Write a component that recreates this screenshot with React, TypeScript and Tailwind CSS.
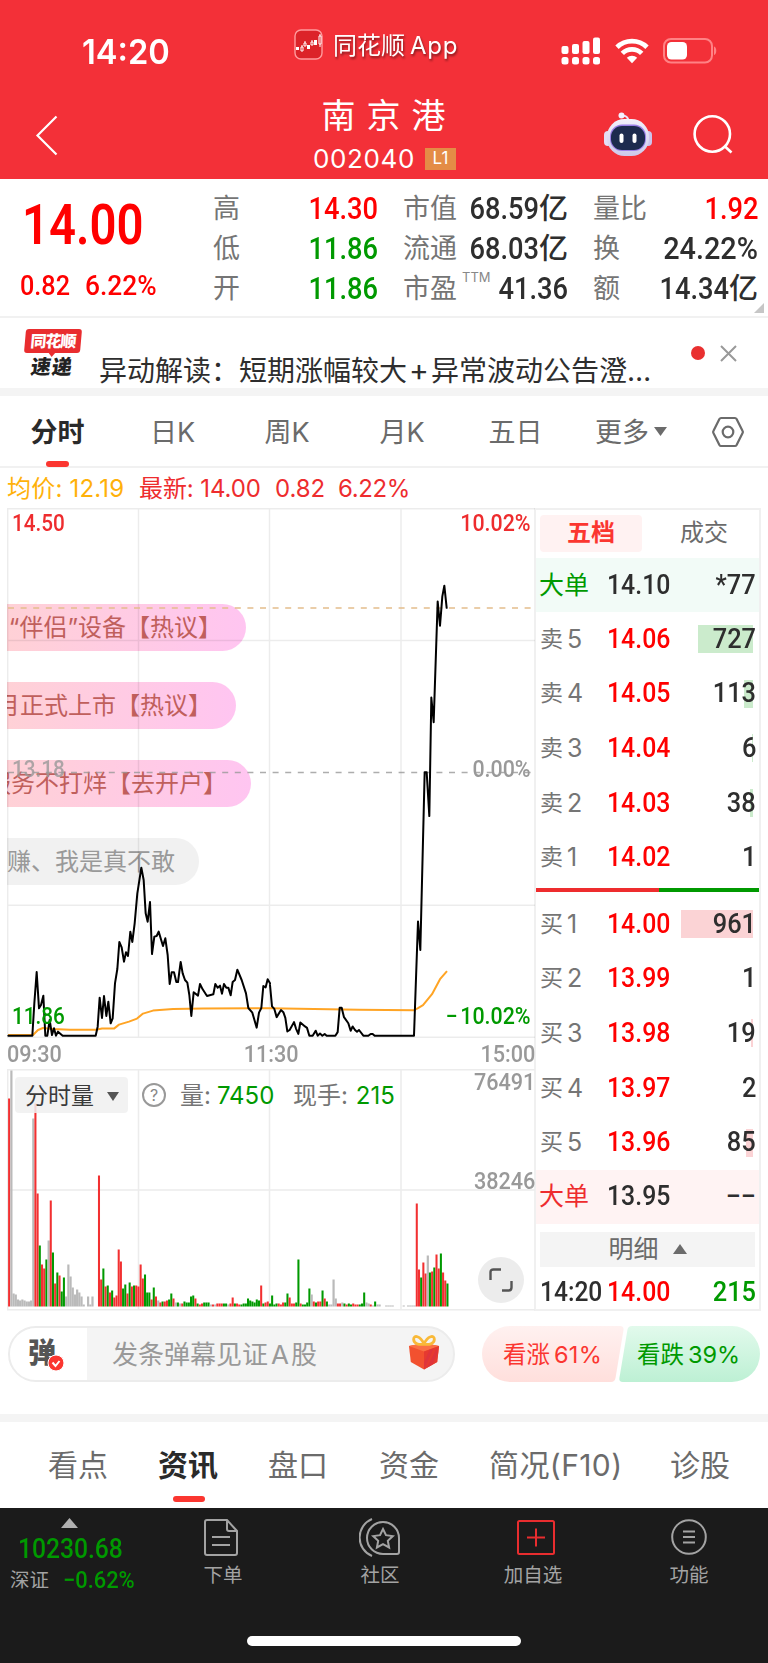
import React from 'react';
import clsx from 'clsx';

const quotes = [
  [
    { label: '高', value: '14.30', color: 'text-[#ff0000]' },
    { label: '低', value: '11.86', color: 'text-[#009900]' },
    { label: '开', value: '11.86', color: 'text-[#009900]' },
  ],
  [
    { label: '市值', value: '68.59', unit: '亿', color: 'text-[#2e2e2e]' },
    { label: '流通', value: '68.03', unit: '亿', color: 'text-[#2e2e2e]' },
    { label: '市盈', sup: 'TTM', value: '41.36', color: 'text-[#2e2e2e]' },
  ],
  [
    { label: '量比', value: '1.92', color: 'text-[#ff0000]' },
    { label: '换', value: '24.22%', color: 'text-[#2e2e2e]' },
    { label: '额', value: '14.34', unit: '亿', color: 'text-[#2e2e2e]' },
  ],
];

const sells = [
  { level: 5, price: '14.06', qty: '727', bar: 55 },
  { level: 4, price: '14.05', qty: '113', bar: 9 },
  { level: 3, price: '14.04', qty: '6', bar: 1 },
  { level: 2, price: '14.03', qty: '38', bar: 3 },
  { level: 1, price: '14.02', qty: '1', bar: 0 },
];

const buys = [
  { level: 1, price: '14.00', qty: '961', bar: 72 },
  { level: 2, price: '13.99', qty: '1', bar: 0 },
  { level: 3, price: '13.98', qty: '19', bar: 2 },
  { level: 4, price: '13.97', qty: '2', bar: 0 },
  { level: 5, price: '13.96', qty: '85', bar: 7 },
];

const morning =
  '25,1337 97,1337 103,1240 110,1146 117,1255 123,1245 130,1217 136,1337 142,1337 149,1290 156,1335 162,1315 168,1337 174,1325 188,1337 287,1337 293,1310 299,1223 306,1284 312,1218 319,1278 325,1235 332,1300 338,1285 345,1180 352,1137 358,1056 365,1072 372,1115 378,1087 384,1098 391,1025 397,1056 404,1000 412,910 424,833 431,870 437,970 443,995 450,936 456,1092 463,1040 470,1038 476,1025 489,1068 496,1045 503,1095 509,1182 515,1147 522,1147 529,1176 534,1176 542,1116 548,1150 555,1170 562,1178 568,1215 574,1278 581,1207 594,1217 600,1182 608,1198 621,1218 640,1213 646,1182 653,1193 660,1187 666,1211 672,1182 679,1193 685,1193 692,1216 698,1176 705,1170 712,1139 725,1170 738,1210 745,1254 757,1268 770,1313 777,1268 784,1254 790,1188 797,1192 803,1168 810,1180';

const afternoon =
  '30,1358 36,1418 43,1425 50,1448 63,1428 70,1434 76,1450 82,1488 89,1484 102,1462 108,1480 115,1495 121,1463 135,1474 141,1478 148,1500 158,1500 167,1486 173,1500 180,1494 187,1500 194,1495 200,1500 226,1500 233,1490 239,1422 245,1422 252,1448 265,1465 272,1486 278,1474 285,1484 291,1489 297,1484 310,1500 325,1500 332,1495 338,1495 344,1500 462,1500 474,1180 481,1260 494,762 500,762 508,885 514,553 521,622 533,284 540,352 547,270 553,240 560,302';

// one entry per minute: r = up, g = down, w = flat, number is the bar height
const volume = (
  'r208 w236 w13 w12 w7 w6 w7 w6 w5 w5 w6 w188 r203 r113 g61 r42 r38 g47 w66 r106 g54 r23 g34 r31 g15 g29 w10 w42 w30 w19 w12 w17 w14 w10 w2 w0 w10 w2 w10 w0 w0 ' +
  'r131 r27 g38 r20 g21 r14 g16 r9 r11 r57 r45 g18 g22 r13 g24 r20 g21 r21 r20 r42 r28 g32 g14 g14 r7 g19 r10 w6 r4 g5 r5 r6 g7 g13 r8 w4 g4 w3 r3 g5 g4 g4 g10 g11 r8 g3 r2 r3 g4 g4 g4 w2 r2 w2 r3 r3 r3 g3 g3 w2 r3 r9 g3 r3 r2 g2 g3 g3 g8 g6 g5 g4 g7 g6 ' +
  'r21 g3 r4 r5 g3 g11 g2 g3 r3 r2 r4 g4 g13 r9 r3 r3 g4 g47 r3 g2 g2 g4 g18 w12 r5 g4 r5 r5 g16 r8 g5 w2 w2 w27 w8 r3 r3 w4 g3 r2 g3 g2 r3 r2 r2 g2 g3 g14 w4 w3 r2 w1 g5 w2 w2 w0 w0 w1 w1 w1 w1 w0 w0 w0 w0 w1 w0 w1 w1 w1 w1 ' +
  'r103 r37 g29 r44 r33 w51 g34 r35 g39 r52 r38 g53 r34 r26 g23'
).split(' ');

const barColors: Record<string, string> = { r: '#f23031', g: '#009900', w: '#bababa' };

const comments = [
  { text: '“伴侣”设备【热议】', width: 'w-[239px]', hot: true },
  { text: '月正式上市【热议】', width: 'w-[229px]', hot: true },
  { text: '服务不打烊【去开户】', width: 'w-[244px]', hot: true },
  { text: '赚、我是真不敢', width: 'w-[192px]', hot: false },
];

// Condensed figures
function Num({ children, className }: { children: React.ReactNode; className?: string }) {
  return (
    <span className={clsx('inline-block whitespace-nowrap font-[Roboto,sans-serif] font-medium leading-none', className)}>
      {children}
    </span>
  );
}

function StatusBar() {
  return (
    <div className="flex h-[90px] text-white">
      <div className="w-[294px] pl-[82px] pt-[35px]">
        <span className="inline-block origin-left scale-x-[.96] text-[34px] font-semibold leading-none">14:20</span>
      </div>
      <div className="flex w-[267px] items-start pt-[29px]">
        <svg width="29" height="31" viewBox="0 0 29 31" fill="none">
          <rect x="1" y="1" width="27" height="29" rx="6" fill="#dc2329" stroke="#ff9b9d" strokeWidth="1.4" />
          <path d="M2 18h3v3H2zM13 16h3v4h-3zM20 11h3v5h-3z" fill="#fff" />
          <path d="M7 18h2v4H7zM10 14h2v3h-2zM17 13h2v3h-2zM25 7h2v8h-2zM8 16v2m3-6v2m7-3v2m8-8v2m0 8v3" stroke="#fff" />
        </svg>
        <span className="ml-[10px] mt-[5px] text-[24px] leading-none drop-shadow-[1px_2px_1px_rgba(0,0,0,.45)]">
          同花顺<span className="ml-[5px] tracking-[.7px]">App</span>
        </span>
      </div>
      <div className="flex items-start gap-[14px] pt-[37px]">
        <svg width="40" height="28" viewBox="0 0 40 28" fill="#fff">
          <rect x="0.5" y="9" width="7" height="8" rx="2" />
          <rect x="11" y="7" width="7" height="10" rx="2" />
          <rect x="21.5" y="4" width="7" height="13" rx="2" />
          <rect x="32" y="0.5" width="7" height="16.5" rx="2" />
          <rect x="0.5" y="20" width="7" height="7.5" rx="2.5" />
          <rect x="11" y="20" width="7" height="7.5" rx="2.5" />
          <rect x="21.5" y="20" width="7" height="7.5" rx="2.5" />
          <rect x="32" y="20" width="7" height="7.5" rx="2.5" />
        </svg>
        <svg width="34" height="27" viewBox="0 0 34 27" fill="none" stroke="#fff" strokeWidth="4.8">
          <path d="M2 10.300a21.5 21.5 0 0 1 30 0" />
          <path d="M7.3 16.400a13.7 13.7 0 0 1 19.400 0" />
          <path d="M11.8 20.8a7.5 7.5 0 0 1 10.4 0L17 26.2z" fill="#fff" stroke="none" />
        </svg>
        <svg width="54" height="27" viewBox="0 0 54 27" fill="none">
          <rect x="1" y="2" width="48" height="23.5" rx="7" stroke="#ff8285" strokeWidth="2" />
          <rect x="4" y="5" width="20" height="17.5" rx="4.5" fill="#fff" />
          <path d="M51 9.5c3 1 3 7.500 0 8.500z" fill="#ff8285" />
        </svg>
      </div>
    </div>
  );
}

function Header() {
  return (
    <header className="h-[179px] bg-[#f33038]">
      <StatusBar />
      <div className="flex h-[89px] text-white">
        <div className="w-[234px] pl-[35px] pt-[25px]">
          <svg width="24" height="41" viewBox="0 0 24 41" fill="none" stroke="#fff" strokeWidth="2.2">
            <path d="M21.500 1.500 2.500 20.500l19 19" />
          </svg>
        </div>
        <div className="w-[300px] text-center">
          <div className="pl-[10px] pt-[9px] text-[34px] leading-[34px] tracking-[11px]">南京港</div>
          <div className="mt-[12px] flex items-center justify-center pl-[1px]">
            <span className="text-[26px] leading-[27px] tracking-[.6px]">002040</span>
            <span className="ml-[10px] flex h-[22px] w-[31px] items-center justify-center bg-[#e48c46] text-[17px] leading-none">
              L1
            </span>
          </div>
        </div>
        <div className="flex w-[234px] pl-[69px]">
          <svg className="mt-[21px]" width="50" height="46" viewBox="0 0 50 46" fill="none">
            <defs>
              <linearGradient id="shell" x2="0" y2="1">
                <stop stopColor="#f3f1fb" />
                <stop offset="1" stopColor="#cdc8ea" />
              </linearGradient>
            </defs>
            <path d="M19 5c4-1 7 2 6 6" stroke="#e9e4fa" strokeWidth="2" />
            <circle cx="18.500" cy="4.500" r="3" fill="#f4f1ff" />
            <rect x="1" y="20" width="8" height="15" rx="4" fill="#e4ddf5" />
            <rect x="41" y="20" width="8" height="15" rx="4" fill="#cdc3ec" />
            <rect x="4" y="8" width="42" height="37" rx="17.500" fill="url(#shell)" />
            <rect x="7" y="13.500" width="36" height="26.500" rx="12" fill="#9a7fe6" />
            <rect x="8" y="15" width="34" height="24" rx="11" fill="#1d2b4e" />
            <rect x="16.500" y="22.500" width="4" height="9.500" rx="2" fill="#fff" />
            <rect x="29.500" y="22.500" width="4" height="9.500" rx="2" fill="#fff" />
          </svg>
          <svg className="ml-[39px] mt-[24px]" width="42" height="42" viewBox="0 0 42 42" fill="none" stroke="#fff" strokeWidth="2.600">
            <circle cx="20.300" cy="20" r="17.700" />
            <path d="m33 32.500 6.500 6" />
          </svg>
        </div>
      </div>
    </header>
  );
}

function QuotePanel() {
  const columns = ['w-[191px] pl-[26px]', 'w-[190px] pl-[25px]', 'w-[190px] pl-[25px]'];
  return (
    <section className="relative flex h-[139px] border-b-2 border-[#f1f1f1]">
      <div className="w-[187px] text-[#ff0000]">
        <Num className="ml-[22px] mt-[19px] origin-left scale-x-[.86] text-[55px] font-semibold">14.00</Num>
        <div className="mt-[19px] flex pl-[20px] text-[28px]">
          <Num className="w-[65px] origin-left scale-x-[.9]">0.82</Num>
          <Num className="origin-left scale-x-[.94]">6.22%</Num>
        </div>
      </div>
      {quotes.map((column, i) => (
        <div key={i} className={clsx('pt-[9px]', columns[i])}>
          {column.map((q) => (
            <div key={q.label} className="flex h-10 items-center whitespace-nowrap">
              <span className="shrink-0 text-[27px] leading-none text-[#757575]">{q.label}</span>
              {q.sup && <span className="-mt-[22px] ml-[5px] w-0 text-[13px] leading-none text-[#888]">{q.sup}</span>}
              <span className={clsx('ml-auto flex items-center', q.color)}>
                <Num className={clsx('origin-right text-[31px]', q.value.includes('%') ? 'scale-x-[.93]' : 'scale-x-[.88]')}>{q.value}</Num>
                {q.unit && <span className="text-[29px] font-medium leading-none">{q.unit}</span>}
              </span>
            </div>
          ))}
        </div>
      ))}
      <svg className="absolute bottom-[3px] right-[4px]" width="10" height="10" viewBox="0 0 10 10">
        <path d="M10 0v10H0z" fill="#c6c6c6" />
      </svg>
    </section>
  );
}

function NewsRow() {
  return (
    <section className="flex h-[78px] border-b-[8px] border-[#f4f4f4]">
      <div className="w-[99px] pl-[25px] pt-[11px]">
        <div className="relative flex h-[24px] w-[56px] -skew-x-[5deg] items-center justify-center rounded-[3px] bg-[#e92d2f] text-[16px] font-black leading-none tracking-[-1px] text-white">
          同花顺
          <svg className="absolute -bottom-[4px] left-[24px]" width="8" height="5" viewBox="0 0 8 5">
            <path d="M0 0h8L4 5z" fill="#e92d2f" />
          </svg>
        </div>
        <div className="ml-[6px] mt-[4px] -skew-x-[8deg] text-[20px] font-black leading-none tracking-[1px] text-[#222]">速递</div>
      </div>
      <div className="w-[592px] whitespace-nowrap pt-[37px] text-[28px] leading-none text-[#2e2e2e]">
        异动解读：短期涨幅较大<span className="inline-block w-[24px] text-center text-[30px]">+</span>异常波动公告澄…
      </div>
      <span className="mt-[28px] size-[14px] rounded-full bg-[#e93030]" />
      <svg className="ml-[15px] mt-[27px]" width="17" height="17" viewBox="0 0 17 17" stroke="#999" strokeWidth="2">
        <path d="m1 1 15 15M16 1 1 16" />
      </svg>
    </section>
  );
}

function PeriodTabs() {
  return (
    <nav className="flex h-[72px] items-center border-b-2 border-[#f1f1f1] pt-[3px] text-[27px] leading-none text-[#6b6b6b]">
      <div className="relative w-[115px] text-center font-bold text-[#2a2a2a]">
        分时
        <span className="absolute -bottom-[21px] left-[46px] h-[6px] w-[23px] rounded-full bg-[#fb3630]" />
      </div>
      <div className="w-[115px] text-center">日K</div>
      <div className="w-[114px] text-center">周K</div>
      <div className="w-[116px] text-center">月K</div>
      <div className="w-[111px] text-center">五日</div>
      <div className="flex w-[140px] items-center pl-[24px]">
        更多
        <svg className="-mt-[2px] ml-[5px]" width="13" height="9" viewBox="0 0 13 9" fill="#6b6b6b">
          <path d="M0 0h13L6.500 9z" />
        </svg>
      </div>
      <svg className="-mt-[2px]" width="34" height="32" viewBox="0 0 34 32" fill="none" stroke="#6b6b6b" strokeWidth="2.200" strokeLinejoin="round">
        <path d="M10 2h14q1 0 1.600 1l6 12q.6 1 0 2l-6 12q-.6 1-1.600 1H10q-1 0-1.600-1l-6-12q-.6-1 0-2l6-12Q9 2 10 2z" />
        <circle cx="17" cy="16" r="5.300" />
      </svg>
    </nav>
  );
}

function PriceChart() {
  return (
    <div className="relative h-[530px] overflow-hidden">
      <div className="flex flex-col items-start gap-[31px] pt-[96px]">
        {comments.map((c) => (
          <div
            key={c.text}
            className={clsx(
              'flex h-[47px] items-center justify-end overflow-hidden whitespace-nowrap rounded-r-full pr-[24px] text-[24px] leading-none',
              c.width,
              c.hot ? 'bg-gradient-to-r from-[#ffd1d6] to-[#ffc5f1] text-[#c05f5c]' : 'bg-[#f1f1f1] text-[#999]'
            )}
          >
            {c.text}
          </div>
        ))}
      </div>
      <svg className="absolute inset-0" width="528" height="530" viewBox="7 508 528 530" fill="none">
        <g stroke="#000" strokeOpacity=".075" strokeWidth="1.500">
          <path d="M138.500 508v530M269.500 508v530M401 508v530M7 640.500h528M7 905.300h528M7 508.700h528M7 1037.300h528M7.700 508v530" />
        </g>
        <path d="M8 608h526" stroke="#e3bd8c" strokeWidth="1.500" strokeDasharray="6 6.600" />
        <path d="M8 772.500h526" stroke="#999" strokeOpacity=".8" strokeWidth="1.500" strokeDasharray="6 6.600" />
        <path
          d="M8 1035h25l5-5 5-2 10 1 17 .7 26 .1 6-1.200h12l5-4 10-3 8-3 6-5 10-3 20-1.500 30-.6 66-.2 30 .4 60 1 55 .500 4-2 5-3 9-11 8-15 7-8"
          stroke="#ffa424"
          strokeWidth="2"
          strokeLinejoin="round"
        />
        <g stroke="#000" strokeWidth="2" strokeLinejoin="round" strokeLinecap="round">
          <polyline points={morning} transform="translate(0 590) scale(.33333)" vectorEffect="non-scaling-stroke" />
          <polyline points={afternoon} transform="translate(260 500) scale(.33333 .35714)" vectorEffect="non-scaling-stroke" />
        </g>
      </svg>
      <div className="absolute inset-x-[5px] inset-y-0 text-[23px]">
        <Num className="absolute left-0 top-[4px] origin-left scale-x-[.9] text-[#ee2c2e]">14.50</Num>
        <Num className="absolute right-[-1px] top-[4px] origin-right scale-x-[.93] text-[#ee2c2e]">10.02%</Num>
        <Num className="absolute left-0 top-[250px] origin-left scale-x-[.9] text-[#999] opacity-80">13.18</Num>
        <Num className="absolute right-[-1px] top-[250px] origin-right scale-x-[.93] text-[#999]">0.00%</Num>
        <Num className="absolute left-0 top-[497px] origin-left scale-x-[.9] text-[#009900]">11.86</Num>
        <Num className="absolute right-[-1px] top-[497px] origin-right scale-x-[.93] text-[#009900]">
          −<span className="ml-[3px]">10.02%</span>
        </Num>
      </div>
    </div>
  );
}

function VolumeChart() {
  return (
    <div className="relative h-[242px]">
      <svg className="absolute inset-0" width="528" height="242" viewBox="7 1069 528 242" fill="none">
        <path
          d="M7 1069.700h528M7 1190h528M7 1309.700h528M138.500 1070v240M269.500 1070v240M401 1070v240M7.700 1070v240"
          stroke="#ececec"
          strokeWidth="1.500"
        />
        {volume.map((v, i) => {
          const h = Number(v.slice(1));
          return <rect key={i} x={8.1 + i * 2.1917} y={1306.5 - h} width={v[0] === 'w' ? 2.2 : 2.05} height={h} fill={barColors[v[0]]} />;
        })}
      </svg>
      <div className="relative flex items-center pl-[8px] pt-[8px] text-[24px] leading-none text-[#757575]">
        <div className="flex h-[36px] w-[113px] items-center rounded-[4px] bg-[#f0f0f0]/85 pl-[10px] pt-[2px] text-[23px] text-[#3a3a3a]">
          分时量
          <svg className="ml-[13px]" width="12" height="9" viewBox="0 0 12 9" fill="#555">
            <path d="M0 0h12L6 9z" />
          </svg>
        </div>
        <span className="ml-[14px] flex size-[24px] items-center justify-center rounded-full border-2 border-[#999] text-[16px] text-[#888]">?</span>
        <span className="ml-[14px] pt-px">量:</span>
        <span className="ml-[6px] w-[76px] pt-px text-[#009900]">7450</span>
        <span className="pt-px">现手:</span>
        <span className="ml-[8px] pt-px text-[#009900]">215</span>
      </div>
      <Num className="absolute right-0 top-[2px] origin-right scale-x-[.94] text-[23px] text-[#999]">76491</Num>
      <Num className="absolute right-0 top-[101px] origin-right scale-x-[.94] text-[23px] text-[#999]">38246</Num>
      <div className="absolute bottom-[8px] right-[11px] flex size-[46px] items-center justify-center rounded-full bg-[#ececec]">
        <svg width="24" height="24" viewBox="0 0 24 24" fill="none" stroke="#555" strokeWidth="2.400">
          <path d="M1.500 12V4.500q0-3 3-3H12M22.500 13v6.500q0 3-3 3H13" />
        </svg>
      </div>
    </div>
  );
}

function Level({ side, level, price, qty, bar }: { side: string; level: number; price: string; qty: string; bar: number }) {
  return (
    <div className="flex h-[54.6px] items-center pl-[4px] pr-[3px]">
      <span className="flex w-[67px] items-center text-[#757575]">
        <span className="text-[23px] leading-none">{side}</span>
        <span className="ml-[4px] text-[25px] leading-none">{level}</span>
      </span>
      <Num className="origin-left scale-x-[.92] text-[27px] text-[#ff0000]">{price}</Num>
      <span className="relative ml-auto flex h-[28px] items-center">
        <span className={clsx('absolute right-[3px] h-full', side === '卖' ? 'bg-[#cbebcc]' : 'bg-[#fbd3d5]')} style={{ width: bar }} />
        <Num className="relative origin-right scale-x-[.94] text-[27px] text-[#2e2e2e]">{qty}</Num>
      </span>
    </div>
  );
}

function OrderBook() {
  return (
    <aside className="-ml-px h-[803px] w-[227px] border-2 border-[#f0f0f0]">
      <div className="flex h-[48px] items-center pb-[2px] pl-[4px] text-[24px] leading-none">
        <div className="flex h-[37px] w-[102px] items-center justify-center rounded-[4px] bg-[#fff2f2] font-bold text-[#fb3630]">五档</div>
        <div className="ml-[38px] text-[#6b6b6b]">成交</div>
      </div>
      <div className="flex h-[54px] items-center bg-[#f2fbf7] pl-[3px] pr-[3px]">
        <span className="w-[68px] text-[25px] leading-none text-[#009900]">大单</span>
        <Num className="origin-left scale-x-[.92] text-[27px] text-[#2e2e2e]">14.10</Num>
        <Num className="ml-auto origin-right scale-x-[.94] text-[27px] text-[#2e2e2e]">*77</Num>
      </div>
      {sells.map((row) => (
        <Level key={row.level} side="卖" {...row} />
      ))}
      <div className="mt-[3px] flex h-[4px]">
        <span className="w-[123px] bg-[#ee2c2e]" />
        <span className="flex-1 bg-[#009900]" />
      </div>
      <div className="pt-[5px]">
        {buys.map((row) => (
          <Level key={row.level} side="买" {...row} />
        ))}
      </div>
      <div className="flex h-[54px] items-center bg-[#fff3f3] pl-[3px] pr-[3px]">
        <span className="w-[68px] text-[25px] leading-none text-[#ee2c2e]">大单</span>
        <Num className="origin-left scale-x-[.92] text-[27px] text-[#2e2e2e]">13.95</Num>
        <Num className="ml-auto text-[27px] text-[#2e2e2e]">−−</Num>
      </div>
      <div className="mx-[4px] mt-[8px] flex h-[35px] items-center justify-center bg-[#f4f4f4] text-[25px] leading-none text-[#6b6b6b]">
        明细
        <svg className="ml-[14px]" width="14" height="10" viewBox="0 0 14 10" fill="#6b6b6b">
          <path d="M0 10h14L7 0z" />
        </svg>
      </div>
      <div className="flex h-[46px] items-center pl-[4px] pr-[3px] pt-[5px] text-[27px]">
        <Num className="w-[67px] origin-left scale-x-[.91] text-[#2e2e2e]">14:20</Num>
        <Num className="origin-left scale-x-[.92] text-[#ff0000]">14.00</Num>
        <Num className="ml-auto origin-right scale-x-[.94] text-[#009900]">215</Num>
      </div>
    </aside>
  );
}

function ChartSection() {
  return (
    <section className="pl-[7px]">
      <div className="flex h-[40px] items-center pt-[2px] text-[24px] leading-none text-[#ee2c2e]">
        <span className="w-[132px] tracking-[.2px] text-[#ffb10a]">均价: 12.19</span>
        <span className="w-[136px] tracking-[-.1px]">最新: 14.00</span>
        <span className="w-[63px] tracking-[-.1px]">0.82</span>
        <span className="tracking-[-.4px]">6.22%</span>
      </div>
      <div className="flex">
        <div className="w-[528px]">
          <PriceChart />
          <div className="flex h-[31px] items-center justify-between pt-[2px] text-[23px] text-[#999]">
            <Num className="origin-left scale-x-[.94]">09:30</Num>
            <Num className="scale-x-[.94]">11:30</Num>
            <Num className="origin-right scale-x-[.94]">15:00</Num>
          </div>
          <VolumeChart />
        </div>
        <OrderBook />
      </div>
    </section>
  );
}

function CommentBar() {
  return (
    <section className="flex h-[111px] border-b-[8px] border-[#f4f4f4] pl-[8px] pt-[15px]">
      <div className="flex h-[56px] w-[447px] items-center overflow-hidden rounded-full border-2 border-[#ececec] bg-[#f4f4f4]">
        <div className="relative h-full w-[77px] shrink-0 bg-white pl-[18px] pt-[11px] text-[28px] font-black leading-none text-[#555]">
          弹
          <svg className="absolute left-[37px] top-[26px]" width="18" height="18" viewBox="0 0 18 18" fill="none">
            <circle cx="9" cy="9" r="8" fill="#fb3630" stroke="#fff" />
            <path d="m5.500 8.500 3 3.500 4-5" stroke="#fff" strokeWidth="2" />
          </svg>
        </div>
        <span className="w-[321px] shrink-0 pl-[25px] pt-px text-[26px] leading-none text-[#999]">
          发条弹幕见证<span className="ml-[3px] mr-[2px]">A</span>股
        </span>
        <svg className="mt-[-3px] shrink-0" width="32" height="37" viewBox="0 0 34 38" fill="none">
          <path d="M1 12 17 9l16 3-2 17-14 8-14-8z" fill="#f2512f" />
          <path d="M1 12 17 9l16 3-16 6z" fill="#fa7045" />
          <path d="M17 18v19l14-8 2-17z" fill="#e63a30" />
          <path d="m23 16-6 14v7l10-22zM31 14 20 35l6-3 5-12z" fill="#d92f45" opacity=".55" />
          <path d="M17 10C13 1 6 0 6 5s6 6 11 5Zm0 0C21 1 28 0 28 5s-6 6-11 5Z" stroke="#f9b938" strokeWidth="3" />
        </svg>
      </div>
      <div className="relative ml-[27px] flex h-[56px] w-[278px] items-center text-[23.500px] leading-none">
        <svg className="absolute inset-0" width="278" height="56" viewBox="0 0 278 56">
          <defs>
            <linearGradient id="up" x2="0" y2="1">
              <stop stopColor="#fff1f0" />
              <stop offset="1" stopColor="#ffdfdc" />
            </linearGradient>
            <linearGradient id="down" x2="0" y2="1">
              <stop stopColor="#e2faec" />
              <stop offset="1" stopColor="#bdf0d4" />
            </linearGradient>
          </defs>
          <path d="M28 0h110q4 0 3.500 4l-8 48q-.7 4-4.500 4H28a28 28 0 0 1 0-56z" fill="url(#up)" />
          <path d="M250 0H150q-4 0-4.600 4l-8 48q-.6 4 3.400 4H250a28 28 0 0 0 0-56z" fill="url(#down)" />
        </svg>
        <span className="relative ml-[21px] w-[134px] pt-px text-[#fb3630]">
          看涨<span className="ml-[4px] tracking-[.3px]">61%</span>
        </span>
        <span className="relative pt-px text-[#009900]">
          看跌<span className="ml-[4px]">39%</span>
        </span>
      </div>
    </section>
  );
}

function InfoTabs() {
  return (
    <nav className="flex h-[86px] whitespace-nowrap pl-[48px] pt-[28px] text-[30px] leading-none text-[#6b6b6b]">
      <span className="w-[110px]">看点</span>
      <span className="relative w-[110px] font-bold text-[#2a2a2a]">
        资讯
        <span className="absolute left-[15px] top-[46px] h-[6px] w-[32px] rounded-full bg-[#fb3630]" />
      </span>
      <span className="w-[111px]">盘口</span>
      <span className="w-[110px]">资金</span>
      <span className="w-[181px] tracking-[.4px]">简况(F10)</span>
      <span>诊股</span>
    </nav>
  );
}

function BottomBar() {
  return (
    <footer className="h-[156px] bg-[#1b1b1b] text-[19.500px] leading-none text-[#a3a3a3]">
      <div className="flex h-[128px]">
        <div className="w-[144px]">
          <svg className="ml-[61px] mt-[10px]" width="17" height="10" viewBox="0 0 17 10" fill="#b0b0b0">
            <path d="M0 10h17L8.500 0z" />
          </svg>
          <Num className="ml-[18px] mt-[7px] !block origin-left scale-x-[.88] text-[28px] text-[#009900]">10230.68</Num>
          <div className="mt-[5px] flex items-center pl-[10px]">
            <span className="pt-px">深证</span>
            <Num className="ml-[14px] origin-left scale-x-[.91] text-[24px] text-[#009900]">−0.62%</Num>
          </div>
        </div>
        <div className="flex w-[158px] flex-col items-center pt-[11px]">
          <svg className="-ml-[5px]" width="34" height="37" viewBox="0 0 34 37" fill="none" stroke="#a3a3a3" strokeWidth="2">
            <path d="M3 1h20l10 11v22q0 2-2 2H3q-2 0-2-2V3q0-2 2-2zM23 1v9q0 2 2 2h8M8 18h18M8 26h18" />
          </svg>
          <span className="mt-[10px]">下单</span>
        </div>
        <div className="flex w-[156px] flex-col items-center pt-[10px]">
          <svg width="42" height="39" viewBox="0 0 42 39" fill="none" stroke="#a3a3a3" strokeWidth="2">
            <path d="M24 4a16 16 0 1 0 0 32h14q2 0 2-2V20A16 16 0 0 0 24 4z" />
            <path d="M13 1a20 20 0 0 0 0 37" />
            <path d="m24 11 3 6.200 6.800.9-5 4.700 1.300 6.700-6.100-3.300-6.100 3.300 1.300-6.700-5-4.700 6.800-.9z" />
          </svg>
          <span className="mt-[9px]">社区</span>
        </div>
        <div className="flex w-[152px] flex-col items-center pt-[12px]">
          <svg className="ml-[3px]" width="38" height="35" viewBox="0 0 38 35" fill="none" stroke="#e92d2f" strokeWidth="2">
            <rect x="1" y="1" width="36" height="33" rx="1.500" />
            <path d="M19 8.500v18M10 17.500h18" />
          </svg>
          <span className="-ml-[2px] mt-[11px]">加自选</span>
        </div>
        <div className="flex w-[158px] flex-col items-center pt-[11px]">
          <svg width="36" height="36" viewBox="0 0 36 36" fill="none" stroke="#a3a3a3" strokeWidth="2">
            <circle cx="18" cy="18" r="16.800" />
            <path d="M12 12.500h12M12 18h12M12 23.500h12" />
          </svg>
          <span className="mt-[11px]">功能</span>
        </div>
      </div>
      <div className="mx-auto h-[10px] w-[274px] rounded-full bg-white" />
    </footer>
  );
}

export default function App() {
  return (
    <div className="w-[768px] overflow-hidden bg-white font-[Inter,'Noto_Sans_CJK_SC',sans-serif]">
      <Header />
      <QuotePanel />
      <NewsRow />
      <PeriodTabs />
      <ChartSection />
      <CommentBar />
      <InfoTabs />
      <BottomBar />
    </div>
  );
}
